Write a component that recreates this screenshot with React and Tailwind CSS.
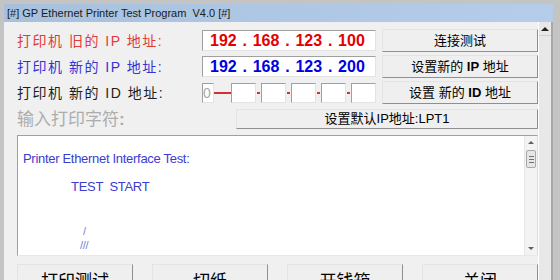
import React from "react";

const sunken =
  "bg-white border border-t-[#a0a0a0] border-l-[#a0a0a0] border-r-[#e3e3e3] border-b-[#e3e3e3]";

const Btn = ({ className, children }) => (
  <div
    className={
      "flex items-center justify-center bg-[#efefef] border border-t-[#e4e4e4] border-l-[#e4e4e4] border-r-[#8f8f8f] border-b-[#8f8f8f] text-black whitespace-pre " +
      className
    }
  >
    {children}
  </div>
);

const IpBox = ({ color, parts }) => (
  <div className={"flex items-center w-[174px] h-[21px] pl-[7px] font-bold text-[16px] leading-none " + sunken + " " + color}>
    {parts.map((p, i) => (
      <React.Fragment key={i}>
        <span>{p}</span>
        {i < parts.length - 1 && <span className="w-[16px] text-center">.</span>}
      </React.Fragment>
    ))}
  </div>
);

const Label = ({ className, children }) => (
  <div className={"w-[185px] text-[14px] tracking-[1.5px] whitespace-pre leading-none " + className}>{children}</div>
);

export default function App() {
  return (
    <div className="w-[560px] h-[280px] overflow-hidden bg-[#c4c4c4] pt-[4px] pl-[4px] pr-[7px] flex flex-col font-['Liberation_Sans','Noto_Sans_CJK_SC',sans-serif]">
      {/* title bar */}
      <div className="h-[18px] shrink-0 flex items-center pl-[3px] bg-gradient-to-r from-[#a7c1dd] to-[#b6cdea] text-[11px] text-[#1a1a1a] whitespace-pre">
        [#] GP Ethernet Printer Test Program  V4.0 [#]
      </div>

      <div className="flex flex-1 min-h-0">
        <div className="w-[534px] bg-[#f0f0f0] flex flex-col pt-[7px] pl-[13px]">
          <div className="flex h-[23px] items-center">
            <Label className="text-[#e23a3a]">打印机 旧的 IP 地址:</Label>
            <IpBox color="text-[#e40000]" parts={["192", "168", "123", "100"]} />
            <Btn className="ml-[6px] w-[156px] h-[23px] text-[13px]">连接测试</Btn>
          </div>

          <div className="flex h-[23px] items-center mt-[3px]">
            <Label className="text-[#3434d4]">打印机 新的 IP 地址:</Label>
            <IpBox color="text-[#0000e0]" parts={["192", "168", "123", "200"]} />
            <Btn className="ml-[6px] w-[156px] h-[23px] text-[13px]">
              设置新的 <b>IP</b> 地址
            </Btn>
          </div>

          <div className="flex h-[23px] items-center mt-[3px]">
            <Label className="text-[#1e1e1e]">打印机 新的 ID 地址:</Label>
            <div className="flex items-center w-[174px]">
              <div className={"w-[12px] h-[20px] flex items-center text-[14px] text-[#a8a8a8] leading-none " + sunken}>0</div>
              <div className="w-[17px] h-[2px] bg-[#d43030]" />
              <div className={"w-[25px] h-[20px] " + sunken} />
              {[0, 1, 2, 3].map((i) => (
                <React.Fragment key={i}>
                  <div className="w-[5px] flex items-center">
                    <div className="w-[3px] h-[2px] ml-[1px] bg-[#d43030]" />
                  </div>
                  <div className={"w-[25px] h-[20px] " + sunken} />
                </React.Fragment>
              ))}
            </div>
            <Btn className="ml-[6px] w-[156px] h-[23px] text-[13px]">
              设置 新的 <b>ID</b> 地址
            </Btn>
          </div>

          <div className="flex h-[20px] items-center mt-[5px]">
            <div className="w-[219px] text-[17px] leading-none text-[#acacac]">
              输入打印字符<b>:</b>
            </div>
            <Btn className="w-[302px] h-[20px] text-[13px]">设置默认IP地址:LPT1</Btn>
          </div>

          {/* memo */}
          <div className="mt-[6px] w-[521px] h-[121px] shrink-0 flex bg-white border border-t-[#a0a0a0] border-l-[#a0a0a0] border-r-[#dcdcdc] border-b-[#e8e8e8]">
            <div className="flex-1 flex flex-col pl-[5px] pt-[15px] text-[13px] text-[#3c3ccf] tracking-[-0.3px]">
              <div className="leading-[16px]">Printer Ethernet Interface Test:</div>
              <div className="leading-[16px] mt-[12px] ml-[48px] whitespace-pre">TEST  START</div>
              <div className="leading-[14px] mt-[29px] ml-[60px] text-[11px] text-[#6f7fd0]">/</div>
              <div className="leading-[14px] ml-[57px] text-[11px] text-[#6f7fd0]">///</div>
            </div>
            <div className="w-[13px] bg-[#f3f3f3] border-l border-[#e6e6e6] flex flex-col items-center">
              <div className="h-[13px] flex items-center justify-center">
                <div className="w-0 h-0 border-l-[3px] border-r-[3px] border-b-[3px] border-l-transparent border-r-transparent border-b-[#606060]" />
              </div>
              <div className="w-[10px] h-[18px] mt-[1px] rounded-[2px] bg-[#e6e6e6] border border-[#a8a8a8] flex flex-col items-center justify-center gap-[2px]">
                <div className="w-[5px] h-px bg-[#707070]" />
                <div className="w-[5px] h-px bg-[#707070]" />
                <div className="w-[5px] h-px bg-[#707070]" />
              </div>
              <div className="flex-1" />
              <div className="h-[13px] flex items-center justify-center">
                <div className="w-0 h-0 border-l-[3px] border-r-[3px] border-t-[3px] border-l-transparent border-r-transparent border-t-[#606060]" />
              </div>
            </div>
          </div>

          <div className="mt-[8px] w-[521px] flex justify-between text-[17px]">
            <Btn className="w-[116px] h-[36px]">打印测试</Btn>
            <Btn className="w-[116px] h-[36px]">切纸</Btn>
            <Btn className="w-[116px] h-[36px]">开钱箱</Btn>
            <Btn className="w-[116px] h-[36px]">关闭</Btn>
          </div>
        </div>

        {/* window scrollbar */}
        <div className="w-[13px] bg-[#e8e8e8] border-l border-white flex flex-col items-center">
          <div className="h-[14px] w-full flex items-center justify-center border-b border-[#d0d0d0]">
            <div className="w-0 h-0 border-l-[4px] border-r-[4px] border-b-[4px] border-l-transparent border-r-transparent border-b-[#202020]" />
          </div>
        </div>
        <div className="w-[2px] bg-[#a8a8a8]" />
      </div>
    </div>
  );
}
